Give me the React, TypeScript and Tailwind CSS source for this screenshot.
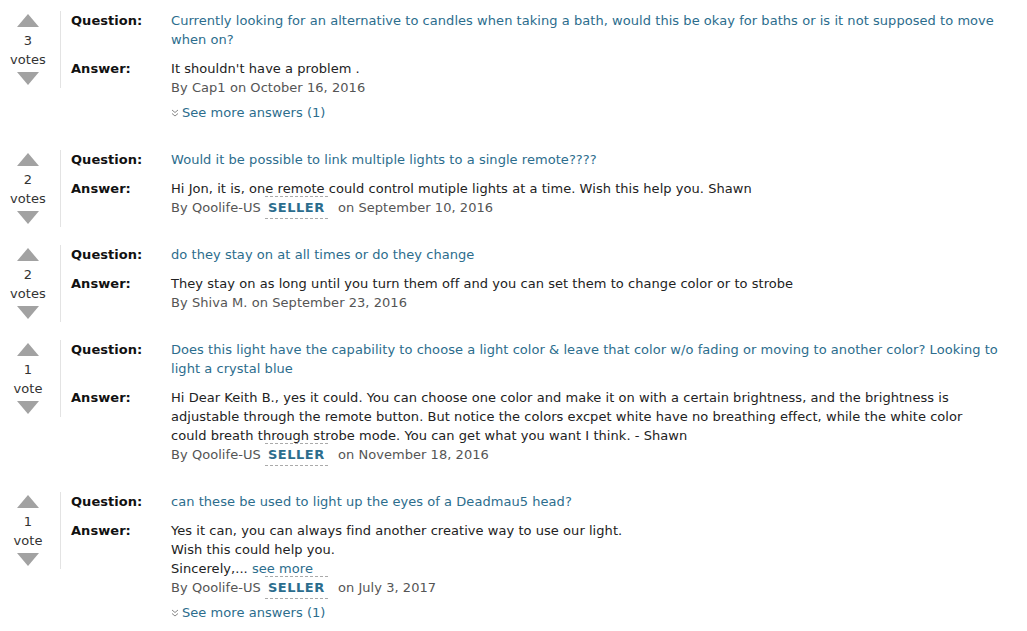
import React from "react";

type Item = {
  votes: number;
  question: string[];
  answer: React.ReactNode[];
  by: string;
  seller?: boolean;
  date: string;
  more?: boolean;
};

const linkColor = "text-[#2c6d8d]";

const items: Item[] = [
  {
    votes: 3,
    question: [
      "Currently looking for an alternative to candles when taking a bath, would this be okay for baths or is it not supposed to move",
      "when on?",
    ],
    answer: ["It shouldn't have a problem ."],
    by: "Cap1",
    date: "October 16, 2016",
    more: true,
  },
  {
    votes: 2,
    question: ["Would it be possible to link multiple lights to a single remote????"],
    answer: ["Hi Jon, it is, one remote could control mutiple lights at a time. Wish this help you. Shawn"],
    by: "Qoolife-US",
    seller: true,
    date: "September 10, 2016",
  },
  {
    votes: 2,
    question: ["do they stay on at all times or do they change"],
    answer: ["They stay on as long until you turn them off and you can set them to change color or to strobe"],
    by: "Shiva M.",
    date: "September 23, 2016",
  },
  {
    votes: 1,
    question: [
      "Does this light have the capability to choose a light color & leave that color w/o fading or moving to another color? Looking to",
      "light a crystal blue",
    ],
    answer: [
      "Hi Dear Keith B., yes it could. You can choose one color and make it on with a certain brightness, and the brightness is",
      "adjustable through the remote button. But notice the colors excpet white have no breathing effect, while the white color",
      "could breath through strobe mode. You can get what you want I think. - Shawn",
    ],
    by: "Qoolife-US",
    seller: true,
    date: "November 18, 2016",
  },
  {
    votes: 1,
    question: ["can these be used to light up the eyes of a Deadmau5 head?"],
    answer: [
      "Yes it can, you can always find another creative way to use our light.",
      "Wish this could help you.",
      <>
        Sincerely,... <span className={linkColor}>see more</span>
      </>,
    ],
    by: "Qoolife-US",
    seller: true,
    date: "July 3, 2017",
    more: true,
  },
];

function Triangle({ down }: { down?: boolean }) {
  return (
    <svg width="22" height="13" viewBox="0 0 22 13">
      <polygon points={down ? "0,0 22,0 11,13" : "11,0 22,13 0,13"} fill="#a2a2a2" />
    </svg>
  );
}

function Votes({ n }: { n: number }) {
  return (
    <div className="w-[61px] h-[77px] border-r border-[#e3e3e3] shrink-0">
      <div className="w-[56px] flex flex-col items-center pt-[3px] text-[#333]">
        <Triangle />
        <span className="mt-[4px]">{n}</span>
        <span>{n === 1 ? "vote" : "votes"}</span>
        <div className="mt-[3px] flex">
          <Triangle down />
        </div>
      </div>
    </div>
  );
}

function QA({ item }: { item: Item }) {
  return (
    <div className="flex items-start">
      <Votes n={item.votes} />
      <div className="pl-[10px] pb-[28px] flex-1 grid grid-cols-[100px_1fr] gap-y-[10px]">
        <div className="font-bold text-[#111]">Question:</div>
        <div className={linkColor}>
          {item.question.map((l, i) => (
            <div key={i} className="whitespace-nowrap">
              {l}
            </div>
          ))}
        </div>
        <div className="font-bold text-[#111]">Answer:</div>
        <div>
          {item.answer.map((l, i) => (
            <div key={i} className="whitespace-nowrap text-[#222]">
              {l}
            </div>
          ))}
          <div className="text-[#555] whitespace-nowrap">
            By {item.by}
            {item.seller && (
              <>
                {" "}
                <span className="font-bold text-[#2c6d8d] tracking-[0.5px] px-[3px] py-[3px] border-y border-dashed border-[#aaa] mr-[6px]">
                  SELLER
                </span>
              </>
            )}{" "}
            on {item.date}
          </div>
          {item.more && (
            <div className={`mt-[6px] flex items-center ${linkColor}`}>
              <svg width="8" height="8" viewBox="0 0 8 8" className="mr-[3px]">
                <path d="M1 1 L4 3.5 L7 1 M1 4.5 L4 7 L7 4.5" stroke="#888" strokeWidth="1" fill="none" />
              </svg>
              See more answers (1)
            </div>
          )}
        </div>
      </div>
    </div>
  );
}

export default function App() {
  return (
    <div
      className="bg-white w-[1027px] h-[631px] overflow-hidden pt-[11px] text-[13px] leading-[19px] tracking-[0.05px]"
      style={{ fontFamily: '"DejaVu Sans", Verdana, sans-serif' }}
    >
      {items.map((it, i) => (
        <QA key={i} item={it} />
      ))}
    </div>
  );
}
